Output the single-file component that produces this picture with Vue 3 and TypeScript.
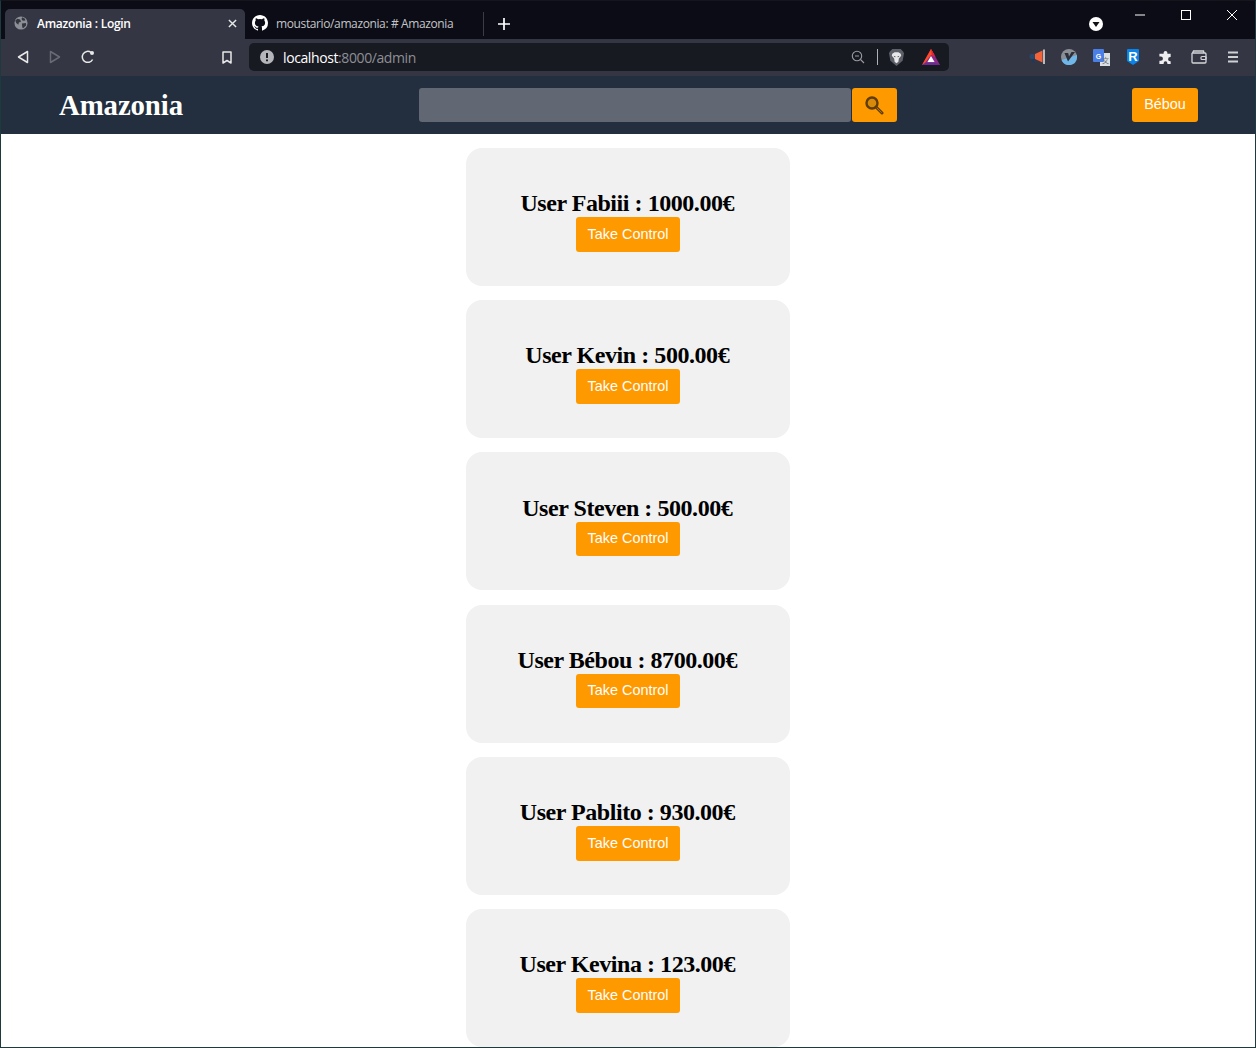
<script setup lang="ts">
interface Account { name: string; balance: string }
const accounts: Account[] = [
  { name: 'Fabiii', balance: '1000.00' },
  { name: 'Kevin', balance: '500.00' },
  { name: 'Steven', balance: '500.00' },
  { name: 'Bébou', balance: '8700.00' },
  { name: 'Pablito', balance: '930.00' },
  { name: 'Kevina', balance: '123.00' },
]
</script>

<template>
  <div class="window">
    <div class="tabstrip">
      <div class="tab active">
        <svg class="fav" viewBox="0 0 16 16" width="14" height="14"><circle cx="8" cy="8" r="7.500" fill="#8d8f96"/><path d="M4 3l3 1 1 2.500-2.500 1L5 10 2.500 8 1.500 5zM9.500 1.500l3 1.500 .5 2-3 .5-1.500-2zM9 8.500l4.500-.5.500 2.500-3.500 3.500-1-1z" fill="#34363f"/></svg>
        <span class="tab-title">Amazonia : Login</span>
        <svg class="tab-x" viewBox="0 0 10 10" width="9" height="9"><path d="M1 1l8 8M9 1l-8 8" stroke="#e8e8e8" stroke-width="1.600"/></svg>
      </div>
      <div class="tab idle">
        <svg class="gh" viewBox="0 0 16 16" width="16" height="16"><path fill="#fff" d="M8 0C3.580 0 0 3.580 0 8c0 3.540 2.290 6.530 5.470 7.590.4.070.550-.170.550-.380v-1.340c-2.230.480-2.690-1.070-2.690-1.070-.360-.920-.890-1.170-.890-1.170-.730-.500.050-.490.050-.490.810.060 1.230.830 1.230.830.720 1.220 1.870.870 2.330.660.070-.520.280-.870.510-1.070-1.780-.200-3.640-.890-3.640-3.950 0-.870.310-1.590.820-2.150-.080-.200-.360-1.020.080-2.120 0 0 .670-.210 2.200.820a7.600 7.600 0 0 1 4 0c1.530-1.040 2.200-.820 2.200-.820.440 1.100.160 1.920.080 2.120.510.560.820 1.270.820 2.150 0 3.070-1.870 3.750-3.650 3.950.290.250.540.730.540 1.480v2.200c0 .210.150.460.550.380A8 8 0 0 0 16 8c0-4.420-3.580-8-8-8z"/></svg>
        <span class="tab-title dim">moustario/amazonia: # Amazonia</span>
      </div>
      <div class="tab-sep"></div>
      <svg class="plus" viewBox="0 0 12 12" width="12" height="12"><path d="M6 0v12M0 6h12" stroke="#fff" stroke-width="1.700"/></svg>
      <div class="spacer"></div>
      <div class="media"><svg viewBox="0 0 14 14" width="14" height="14"><circle cx="7" cy="7" r="7" fill="#fff"/><path d="M3.500 5h7L7 10z" fill="#111"/></svg></div>
      <div class="win-ctl">
        <svg viewBox="0 0 10 10" width="10" height="10"><path d="M0 5h10" stroke="#fff"/></svg>
        <svg viewBox="0 0 10 10" width="10" height="10"><rect x=".5" y=".5" width="9" height="9" fill="none" stroke="#fff"/></svg>
        <svg viewBox="0 0 10 10" width="10" height="10"><path d="M0 0l10 10M10 0L0 10" stroke="#fff"/></svg>
      </div>
    </div>

    <div class="toolbar">
      <div class="nav-btns">
        <svg viewBox="0 0 12 14" width="12" height="14"><path d="M10.500 1.500v11L1.500 7z" fill="none" stroke="#e8e8e8" stroke-width="1.500" stroke-linejoin="round"/></svg>
        <svg viewBox="0 0 12 14" width="12" height="14"><path d="M1.500 1.500v11l9-5.500z" fill="none" stroke="#686b74" stroke-width="1.500" stroke-linejoin="round"/></svg>
        <svg viewBox="0 0 14 14" width="14" height="14"><path d="M11.600 9.500A5.500 5.500 0 1 1 10 2.400" fill="none" stroke="#e8e8e8" stroke-width="1.500"/><circle cx="11" cy="3" r="2" fill="#e8e8e8"/></svg>
      </div>
      <svg class="bookmark" viewBox="0 0 10 13" width="10" height="13"><path d="M1 1h8v11L5 9.500 1 12z" fill="none" stroke="#e8e8e8" stroke-width="1.500" stroke-linejoin="round"/></svg>
      <div class="omnibox">
        <svg viewBox="0 0 14 14" width="14" height="14"><circle cx="7" cy="7" r="7" fill="#b4b5ba"/><path d="M7 3v5M7 9.500v1.700" stroke="#1a1c24" stroke-width="2"/></svg>
        <span class="url"><b>localhost</b><i>:8000/admin</i></span>
        <div class="spacer"></div>
        <svg viewBox="0 0 14 14" width="14" height="14"><circle cx="6" cy="6" r="4.700" fill="none" stroke="#9b9ca2" stroke-width="1.100"/><path d="M4 6h4M9.500 9.500l3.500 3.500" stroke="#9b9ca2" stroke-width="1.100"/></svg>
        <div class="omni-sep"></div>
        <svg class="lion" viewBox="0 0 16 18" width="15" height="17"><path d="M3.500 0h9L15 2.500l1 2-1.500 8L8 18l-6.500-5.500L0 4.500l1-2z" fill="#5d6069"/><path d="M3.500 5L6 3.500h4L12.500 5l.5 2-2.500 3-.5 3.500L8 15l-2-1.500L5.500 10 3 7z" fill="#e9e9ea"/><path d="M5 7l2 .8v1L5.500 8.500zM11 7L9 7.800v1l1.500-.3z" fill="#5d6069"/></svg>
        <svg class="bat" viewBox="0 0 18 16" width="18" height="16"><path d="M9 0l9 16H0z" fill="#8a2a8a"/><path d="M9 0l3.500 6H9L3.200 13.500 0 16z" fill="#ff4b1f"/><path d="M9 0l4.500 8L10 7z" fill="#e0203f"/><path d="M9 7l3.700 6.200H5.300z" fill="#fff"/><path d="M0 16l5.300-2.800h7.400L18 16z" fill="#6a2c91"/></svg>
      </div>
      <div class="extensions">
        <svg viewBox="0 0 16 16" width="16" height="16"><path d="M6 5L13.500 1.500v12L6 10z" fill="#f4623a"/><path d="M15 0.500v14.500" stroke="#f4f4f4" stroke-width="1.400"/><rect x="0.500" y="5" width="5.500" height="5" rx="2" fill="#28486b"/><rect x="3" y="10" width="2.500" height="4" fill="#1f3a59"/></svg>
        <svg viewBox="0 0 16 16" width="16" height="16"><circle cx="8" cy="8" r="8" fill="#8a8f96"/><path d="M0.600 11A8 8 0 0 0 16 8.500V6z" fill="#6fb7e8"/><path d="M3.500 4h3.700l.8 3.500L10.500 3H14L7 12.500z" fill="#2b2f3a"/></svg>
        <svg viewBox="0 0 17 17" width="17" height="17"><rect x="7" y="4" width="10" height="13" fill="#dcdfe2"/><rect x="0" y="0" width="11" height="13" rx="1" fill="#4a7fe8"/><text x="5.500" y="9.500" class="ext-g">G</text><text x="12.500" y="14" class="ext-w">文</text></svg>
        <svg viewBox="0 0 12 16" width="12" height="16"><path d="M0 1a1 1 0 0 1 1-1h10a1 1 0 0 1 1 1v11l-6 4-6-4z" fill="#0a84e8"/><text x="6" y="12" class="ext-r">R</text></svg>
        <svg viewBox="0 0 16 16" width="15" height="15"><path d="M6 3a2 2 0 0 1 4 0v1h3.500v3.500H13a2.200 2.200 0 0 0 0 4.500h.5V15H10v-1a2 2 0 0 0-4 0v1H1.500v-3.500H3a2.200 2.200 0 0 0 0-4.500H1.500V4H6z" fill="#eeeeee"/></svg>
        <svg viewBox="0 0 16 14" width="16" height="14"><path d="M1 3.500V12a1 1 0 0 0 1 1h12a1 1 0 0 0 1-1V4a1 1 0 0 0-1-1H2zM1.500 3l1-2h10l.5 2" fill="none" stroke="#d5d6d9" stroke-width="1.300"/><rect x="10" y="6.500" width="5" height="3" rx="1" fill="none" stroke="#d5d6d9" stroke-width="1.200"/></svg>
        <svg viewBox="0 0 10 12" width="10" height="12"><path d="M0 1.500h10M0 6h10M0 10.500h10" stroke="#cfd0d3" stroke-width="2"/></svg>
      </div>
    </div>

    <header class="navbar">
      <a class="brand">Amazonia</a>
      <form class="search" @submit.prevent>
        <input class="search-input" type="text" />
        <button class="btn search-btn" type="submit" aria-label="Search">
          <svg viewBox="0 0 20 20" width="20" height="20"><circle cx="8" cy="8" r="5.500" fill="#d98a08" stroke="#5e3c04" stroke-width="2.400"/><path d="M12.500 12.500l5.500 5.500" stroke="#5e3c04" stroke-width="3" stroke-linecap="round"/><path d="M13 13l4.500 4.500" stroke="#b37208" stroke-width="1" stroke-linecap="round"/></svg>
        </button>
      </form>
      <button class="btn user-btn">Bébou</button>
    </header>

    <main class="list">
      <section v-for="a in accounts" :key="a.name" class="card">
        <h2>User {{ a.name }} : {{ a.balance }}€</h2>
        <button class="btn take">Take Control</button>
      </section>
    </main>
  </div>
</template>

<style>
html, body { margin: 0; height: 100%; overflow: hidden; background: #fff; }
</style>

<style scoped>
.window {
  box-sizing: border-box;
  width: 1256px;
  height: 1048px;
  overflow: hidden;
  display: flex;
  flex-direction: column;
  border: 1px solid #1f3a3f;
  border-top-color: #14161c;
  background: #fff;
}
.spacer { flex: 1; }

.tabstrip {
  flex: 0 0 38px;
  display: flex;
  align-items: flex-end;
  background: #0b0c15;
  padding-left: 4px;
}
.tab {
  box-sizing: border-box;
  height: 30px;
  display: flex;
  align-items: center;
  padding-bottom: 2px;
  font: 12px "Open Sans", "Noto Sans", sans-serif;
}
.active {
  width: 240px;
  background: #343643;
  border-radius: 5px 5px 0 0;
  padding-left: 9px;
  padding-right: 8px;
  color: #fff;
}
.active .tab-title { margin-left: 9px; flex: 1; font-weight: 600; letter-spacing: -0.29px; }
.idle { width: 238px; padding-left: 7px; }
.dim { margin-left: 8px; color: #c4c5c9; letter-spacing: -0.38px; }
.tab-sep { width: 1px; height: 24px; background: #3a3c46; margin-bottom: 3px; }
.plus { margin: 0 0 9px 14px; }
.media { margin: 0 32px 8px 0; height: 14px; }
.media svg, .win-ctl svg { display: block; }
.win-ctl {
  align-self: flex-start;
  display: flex;
  gap: 36px;
  margin: 9px 18px 0 0;
}

.toolbar {
  flex: 0 0 37px;
  box-sizing: border-box;
  display: flex;
  align-items: center;
  background: #343643;
  padding: 0 0 1px 16px;
}
.nav-btns { display: flex; align-items: center; gap: 20px; width: 205px; }
.bookmark { margin-right: 17px; }
.omnibox {
  box-sizing: border-box;
  width: 700px;
  height: 28px;
  display: flex;
  align-items: center;
  background: #181a22;
  border-radius: 5px;
  padding: 0 9px 0 11px;
}
.url { margin-left: 9px; font: 14px "Open Sans", "Noto Sans", sans-serif; letter-spacing: -0.4px; }
.url b { font-weight: 400; color: #fff; }
.url i { font-style: normal; color: #8e8f95; }
.omni-sep { width: 1px; height: 16px; background: #b0b1b5; margin: 0 11px 0 12px; }
.bat { margin-left: 18px; }
.extensions {
  display: grid;
  grid-template-columns: repeat(5, 32px) 35px 33px;
  justify-items: center;
  align-items: center;
  padding-left: 72px;
}
.ext-g { font: bold 7px "Liberation Sans", sans-serif; fill: #fff; text-anchor: middle; }
.ext-w { font: 7px "Noto Sans CJK SC", sans-serif; fill: #6d7278; text-anchor: middle; }
.ext-r { font: bold 13px "Liberation Sans", sans-serif; fill: #fff; text-anchor: middle; }

.navbar {
  flex: 0 0 58px;
  box-sizing: border-box;
  display: flex;
  align-items: center;
  justify-content: space-between;
  padding: 0 57px 0 58px;
  background: #232f3e;
}
.brand {
  width: 124.500px;
  font: bold 28.800px "Liberation Serif", "Times New Roman", serif;
  letter-spacing: -0.1px;
  color: #fff;
}
.search { display: flex; gap: 1px; height: 34px; }
.search-input {
  box-sizing: border-box;
  width: 432px;
  height: 34px;
  border: 0;
  border-radius: 3px;
  background: #616873;
}
.btn {
  box-sizing: border-box;
  border: 0;
  border-radius: 3px;
  padding: 0;
  background: #ff9900;
  color: #fff;
  font: 14.400px "Liberation Sans", Arial, sans-serif;
}
.search-btn { width: 45px; height: 34px; display: flex; align-items: center; justify-content: center; }
.user-btn { width: 66px; height: 34px; padding-bottom: 2px; }

.list {
  display: flex;
  flex-direction: column;
  align-items: center;
  padding-top: 14px;
  gap: 14.200px;
  background: #fff;
}
.card {
  box-sizing: border-box;
  width: 324px;
  flex: 0 0 auto;
  height: 138px;
  display: flex;
  flex-direction: column;
  align-items: center;
  justify-content: flex-end;
  padding-bottom: 34.250px;
  background: #f1f1f1;
  border-radius: 16px;
  color: #000;
}
.card h2 {
  margin: 0 0 -0.050px;
  padding-right: 1.500px;
  font: bold 24px "Liberation Serif", "Times New Roman", serif;
  letter-spacing: -0.45px;
}
.take { width: 104px; height: 34.600px; padding-bottom: 1.140px; }
</style>
